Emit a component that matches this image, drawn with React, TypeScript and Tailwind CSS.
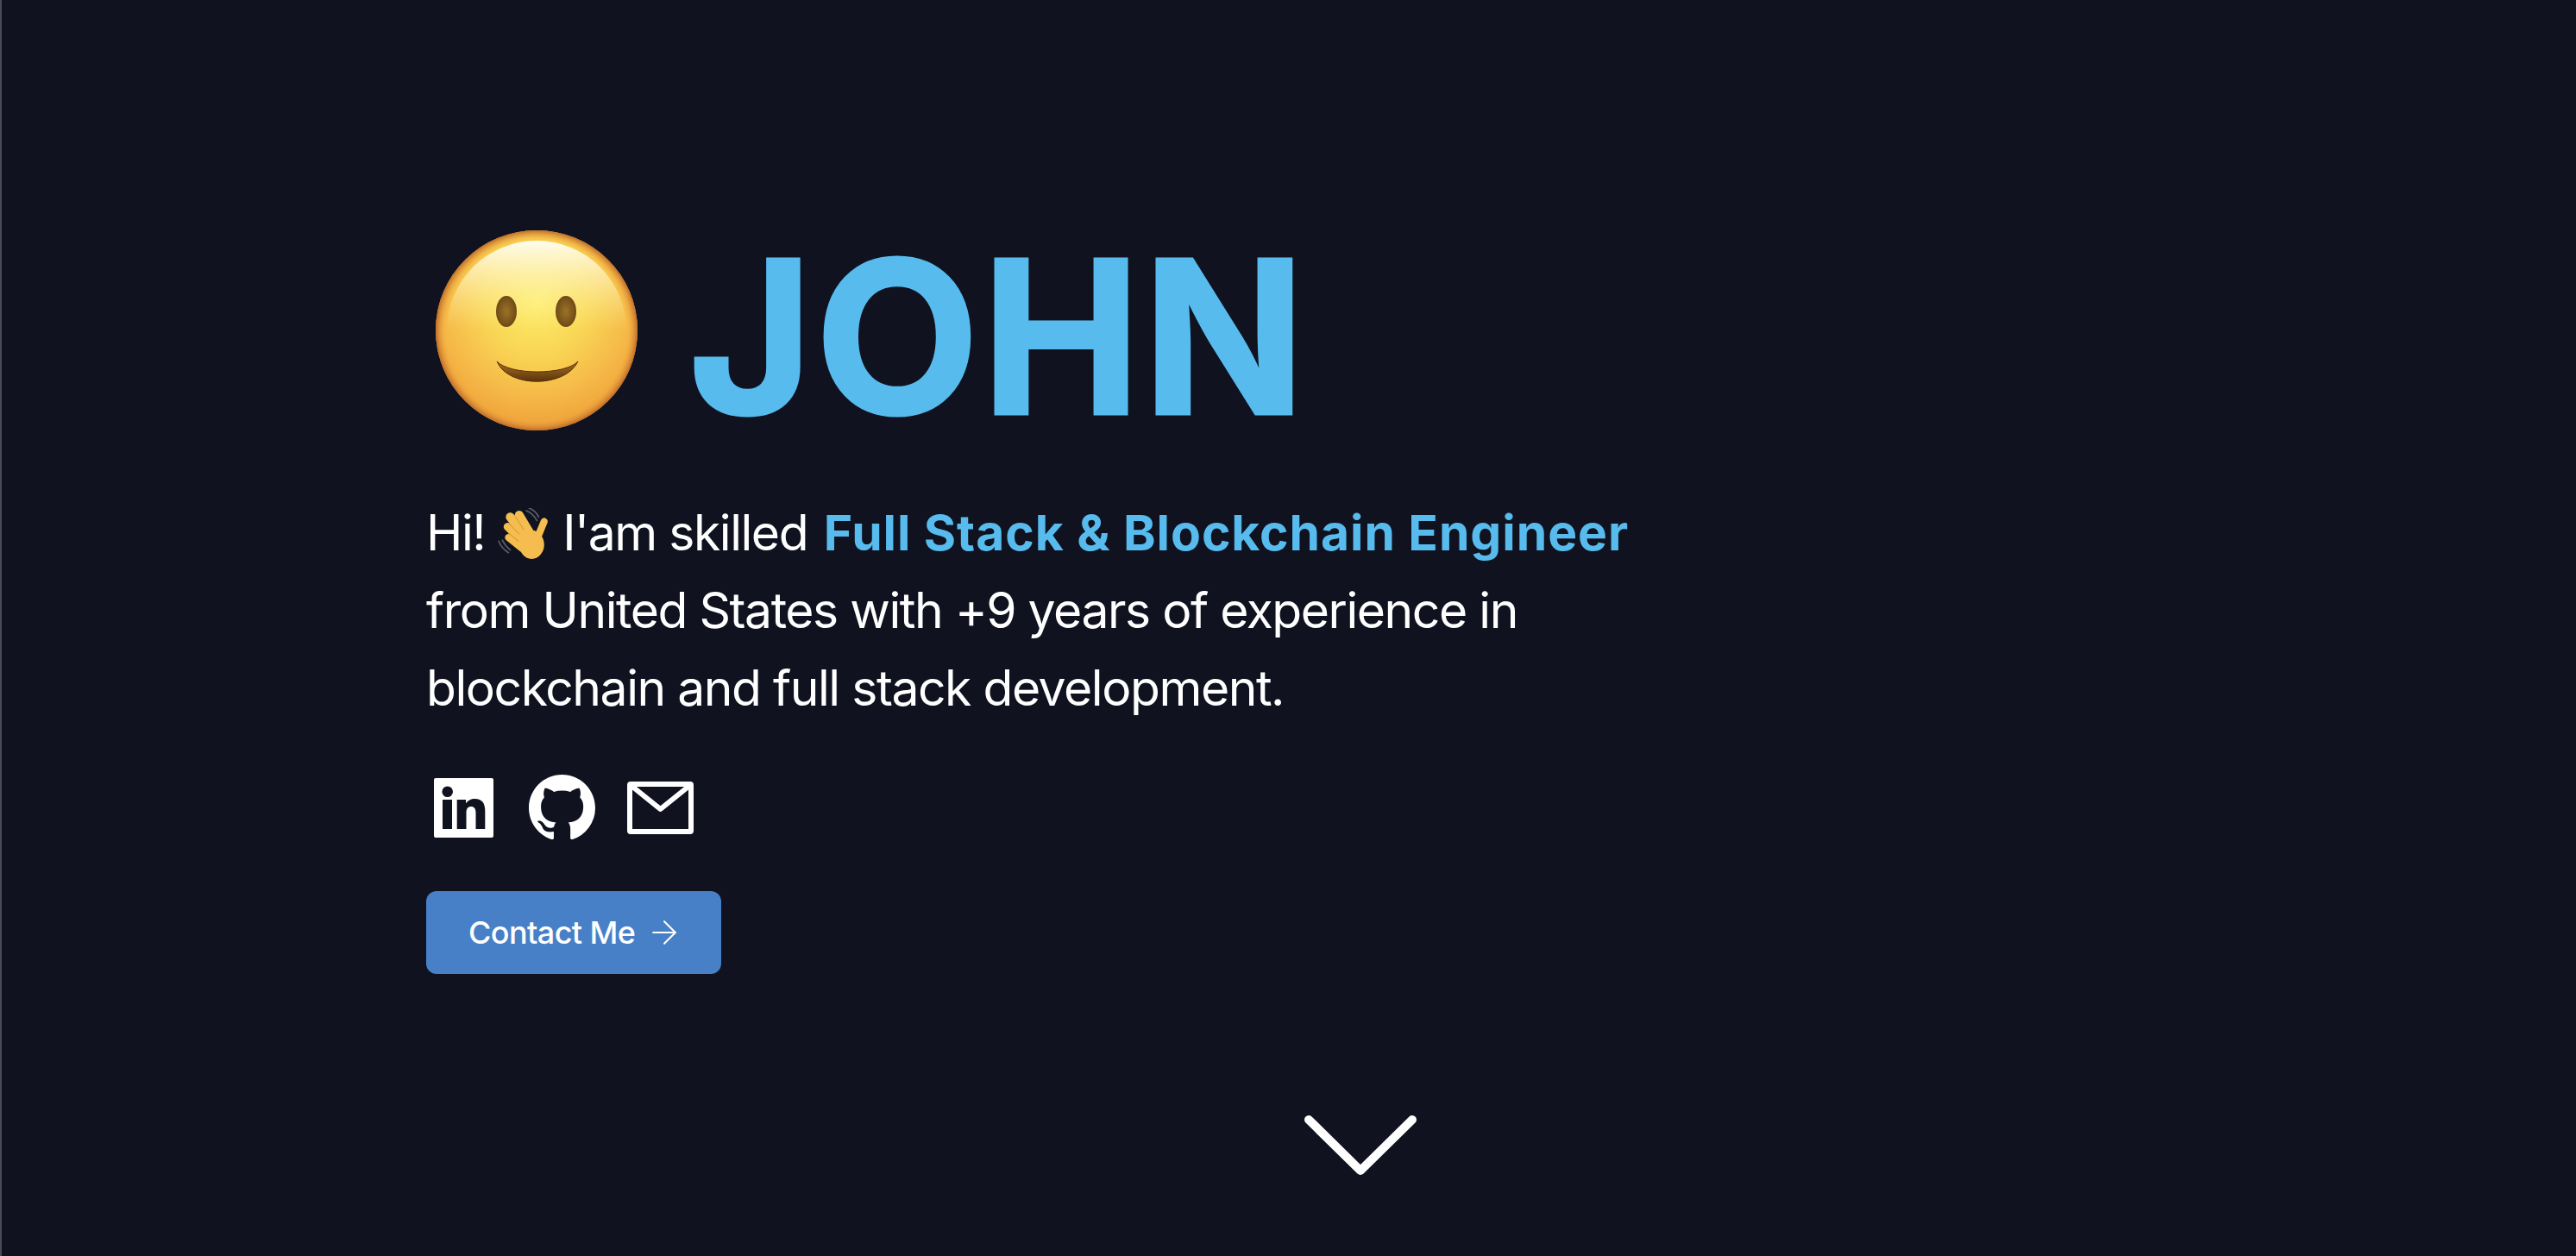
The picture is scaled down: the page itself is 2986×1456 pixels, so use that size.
import { ArrowRight } from "lucide-react";

function SmileEmoji() {
  return (
    <svg viewBox="0 0 234 232" className="h-[232px] w-[234px] shrink-0" role="img" aria-label="smiling face">
      <defs>
        <radialGradient id="faceFill" cx="50%" cy="36%" r="68%">
          <stop offset="0%" stopColor="#fdec68" />
          <stop offset="38%" stopColor="#f9d655" />
          <stop offset="72%" stopColor="#f5b646" />
          <stop offset="100%" stopColor="#ec9a36" />
        </radialGradient>
        <radialGradient id="faceRim" cx="50%" cy="50%" r="50%">
          <stop offset="90%" stopColor="#f3a93f" stopOpacity="0" />
          <stop offset="100%" stopColor="#bd6a28" stopOpacity="0.95" />
        </radialGradient>
        <linearGradient id="faceShine" x1="0" y1="0" x2="0" y2="1">
          <stop offset="0%" stopColor="#fffdf0" stopOpacity="0.98" />
          <stop offset="50%" stopColor="#fff6a0" stopOpacity="0" />
        </linearGradient>
        <linearGradient id="mouthFill" x1="0" y1="0" x2="0" y2="1">
          <stop offset="0%" stopColor="#a8702a" />
          <stop offset="100%" stopColor="#5a3408" />
        </linearGradient>
        <radialGradient id="eyeFill" cx="50%" cy="50%" r="55%">
          <stop offset="0%" stopColor="#9c7229" />
          <stop offset="100%" stopColor="#6b4614" />
        </radialGradient>
      </defs>
      <ellipse cx="117" cy="116" rx="117" ry="116" fill="url(#faceFill)" />
      <ellipse cx="117" cy="116" rx="117" ry="116" fill="url(#faceRim)" />
      <ellipse cx="117" cy="116" rx="104" ry="104" fill="url(#faceShine)" />
      <ellipse cx="82" cy="94" rx="12" ry="18" fill="url(#eyeFill)" />
      <ellipse cx="151" cy="94" rx="12" ry="18" fill="url(#eyeFill)" />
      <path d="M71 152 C84 183 150 183 165 152 C150 168 86 168 71 152 Z" fill="url(#mouthFill)" stroke="#5a3408" strokeWidth="1" strokeLinejoin="round" />
    </svg>
  );
}

function WaveEmoji() {
  return (
    <svg viewBox="0 0 60 60" className="ml-[14px] mr-[14px] inline-block h-[62px] w-[62px] align-[-13px]" role="img" aria-label="waving hand">
      <g fill="none" stroke="#5c5f68" strokeWidth="1.6" strokeLinecap="round">
        <path d="M33 3 C38 5 42 9 45 14" />
        <path d="M36 0 C41 2 45 6 47 10" />
        <path d="M2 37 C4 42 8 47 13 50" />
        <path d="M6 36 C8 40 11 44 15 47" />
      </g>
      <g fill="none" stroke="#f5bd4f" strokeLinecap="round">
        <path d="M25 8 L38 30" strokeWidth="10" />
        <path d="M15 10 L32 32" strokeWidth="10" />
        <path d="M12 21 L30 38" strokeWidth="9" />
        <path d="M13 33 L28 45" strokeWidth="8" />
        <path d="M53 15 L46 32" strokeWidth="8" />
      </g>
      <ellipse cx="39" cy="41" rx="14" ry="16" fill="#f5bd4f" />
      <g fill="none" stroke="#d99a33" strokeWidth="1" strokeLinecap="round">
        <path d="M21 10 L30 24" />
        <path d="M13 17 L25 29" />
        <path d="M13 28 L24 37" />
      </g>
    </svg>
  );
}

function LinkedinIcon() {
  return (
    <svg viewBox="0 0 69 69" className="h-[69px] w-[69px]" role="img" aria-label="LinkedIn">
      <path
        fill="#fff"
        fillRule="evenodd"
        d="M2 0H67A2 2 0 0 1 69 2V67A2 2 0 0 1 67 69H2A2 2 0 0 1 0 67V2A2 2 0 0 1 2 0ZM10 25V59H21V25ZM15.7 9.4A6.3 6.3 0 1 0 15.7 22A6.3 6.3 0 1 0 15.7 9.4ZM26.7 25V59H37.5V40C37.5 35.5 39.5 33 43 33C46.5 33 48.5 35.5 48.5 40V59H59.3V38C59.3 29.5 56 24 47.5 24C43 24 39 26 37 29.5V25Z"
      />
    </svg>
  );
}

function GithubIcon() {
  return (
    <svg viewBox="0 0 16 16" className="ml-[41px] h-[77px] w-[77px]" role="img" aria-label="GitHub">
      <path
        fill="#fff"
        d="M8 0C3.58 0 0 3.58 0 8c0 3.54 2.29 6.53 5.47 7.59.4.07.55-.17.55-.38 0-.19-.01-.82-.01-1.49-2.01.37-2.53-.49-2.69-.94-.09-.23-.48-.94-.82-1.13-.28-.15-.68-.52-.01-.53.63-.01 1.08.58 1.23.82.72 1.21 1.87.87 2.33.66.07-.52.28-.87.51-1.07-1.78-.2-3.64-.89-3.64-3.95 0-.87.31-1.59.82-2.15-.08-.2-.36-1.02.08-2.12 0 0 .67-.21 2.2.82.64-.18 1.32-.27 2-.27.68 0 1.36.09 2 .27 1.53-1.04 2.2-.82 2.2-.82.44 1.1.16 1.92.08 2.12.51.56.82 1.27.82 2.15 0 3.07-1.87 3.75-3.65 3.95.29.25.54.73.54 1.48 0 1.07-.01 1.93-.01 2.2 0 .21.15.46.55.38A8.013 8.013 0 0016 8c0-4.42-3.58-8-8-8z"
      />
    </svg>
  );
}

export default function App() {
  return (
    <div className="h-[1456px] w-full overflow-hidden border-l-2 border-[#4a4d57] bg-[#10131f] pl-[492px] pt-[236px] font-['Inter',sans-serif] text-white">
      <div className="flex h-[292px] items-center">
        <div className="ml-[11px] mt-[2px] flex">
          <SmileEmoji />
        </div>
        <h1 className="ml-[59px] mt-[16px] text-[247px] font-bold leading-none tracking-[2.5px] text-[#57bbee] [-webkit-text-stroke:3px_#57bbee]">JOHN</h1>
      </div>
      <p className="mt-[45px] w-[1450px] text-[57px] font-normal leading-[90px] tracking-[-1.45px]">
        Hi!
        <WaveEmoji />
        I'am skilled <span className="ml-[4px] font-bold tracking-[0.95px] text-[#57bbee]">Full Stack &amp; Blockchain Engineer</span>
        <br />
        from United States with +9 years of experience in
        <br />
        blockchain and full stack development.
      </p>
      <div className="mt-[55px] flex h-[77px] items-center pl-[9px]">
        <LinkedinIcon />
        <GithubIcon />
        <svg viewBox="0 0 77 61" className="ml-[37px] h-[61px] w-[77px]" fill="none" stroke="#fff" strokeWidth="6" strokeLinejoin="round">
          <rect x="3" y="3" width="71" height="55" rx="1" />
          <path d="M5 5 L38.5 32 L72 5" strokeLinecap="round" />
        </svg>
      </div>
      <button className="mt-[58px] flex h-[96px] w-[342px] items-center justify-start rounded-[12px] bg-[#4880c8] pl-[49px] text-[36px] font-medium tracking-[-0.6px]">
        Contact Me
        <ArrowRight className="ml-[12px] h-[44px] w-[44px]" strokeWidth={1.1} />
      </button>
      <svg viewBox="0 0 130 69" className="ml-[1018px] mt-[164px] h-[69px] w-[130px]" fill="none" stroke="#fff" strokeWidth="10" strokeLinecap="round" strokeLinejoin="round">
        <path d="M5 5 L65 64 L125 5" />
      </svg>
    </div>
  );
}
